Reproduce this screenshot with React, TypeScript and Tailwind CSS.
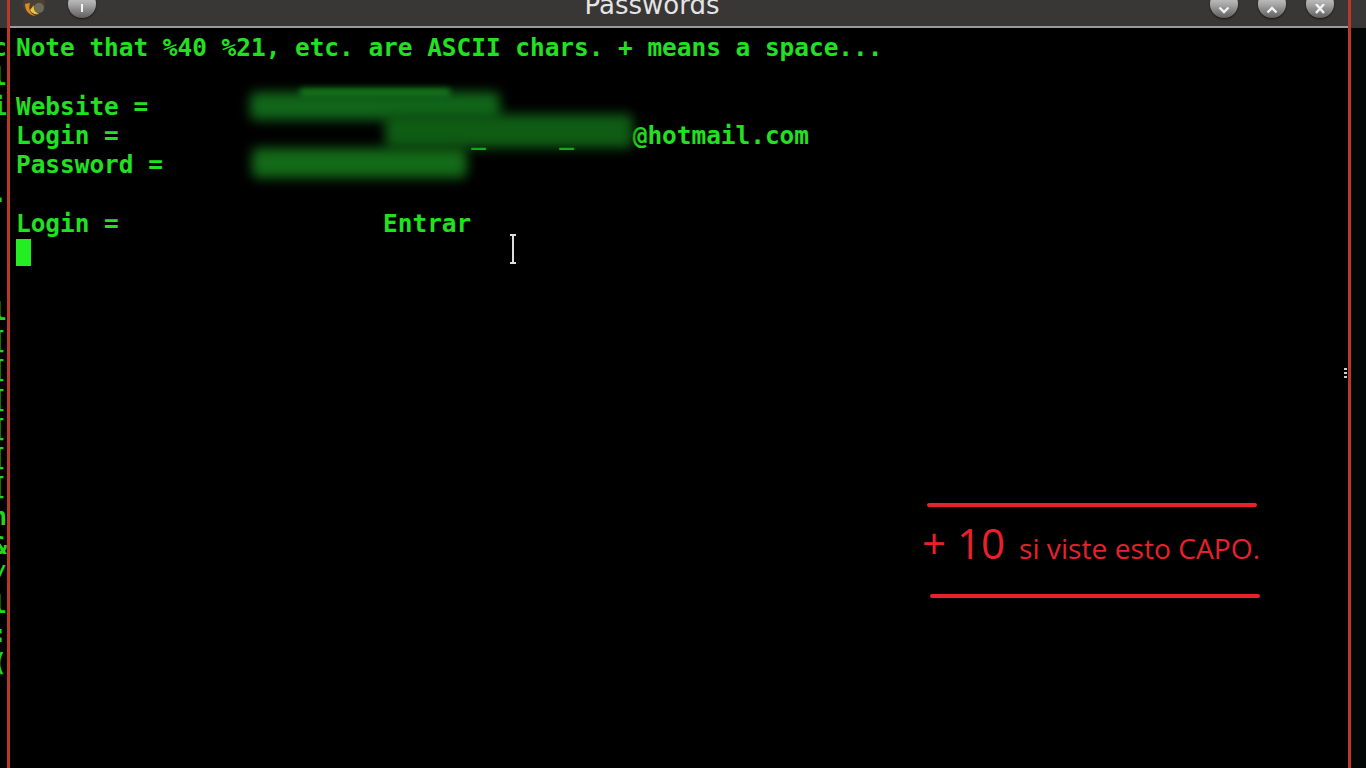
import React from "react";

const mono = { fontFamily: '"DejaVu Sans Mono", "Liberation Mono", monospace' };

function RoundButton({ children }: { children?: React.ReactNode }) {
  return (
    <div className="relative flex h-[28px] w-[28px] items-end justify-center rounded-full bg-gradient-to-b from-[#e2e2e2] via-[#a9a9a9] to-[#5f5f5f] pb-[4px] shadow-[0_1px_2px_rgba(0,0,0,0.6)]">
      {children}
    </div>
  );
}

function TitleBar() {
  return (
    <div className="flex h-[28px] items-start border-b-2 border-[#9a9a9a] bg-[#393636]">
      <div className="flex w-[90px] items-start gap-[20px] pl-[10px]">
        <div className="-mt-[10px] h-[28px] w-[28px]">
          <svg viewBox="0 0 28 28" width="28" height="28">
            <circle cx="14" cy="14" r="11" fill="#4a4036" />
            <path d="M5 14 C5 22 11 26 16 26 C10 24 8 19 10 13 Z" fill="#e08a1e" />
            <path d="M10 20 C12 24 16 25 19 24 C15 22 13 19 14 15 Z" fill="#f4c040" />
            <circle cx="19" cy="18" r="5" fill="#6e6a58" />
          </svg>
        </div>
        <div className="-mt-[10px]">
          <RoundButton>
            <div className="mb-[2px] h-[8px] w-[2px] bg-[#f4f4f4]" />
          </RoundButton>
        </div>
      </div>
      <div className="flex flex-1 justify-center overflow-hidden">
        <span
          className="-mt-[7px] text-[26px] leading-[25px] text-[#e4e4e4]"
          style={{ fontFamily: '"DejaVu Sans", sans-serif' }}
        >
          Passwords
        </span>
      </div>
      <div className="flex w-[144px] items-start gap-[20px] pl-[6px]">
        <div className="-mt-[10px]">
          <RoundButton>
            <svg width="12" height="8" viewBox="0 0 12 8">
              <path d="M1.5 1.5 L6 6 L10.5 1.5" stroke="#f2f2f2" strokeWidth="2.4" fill="none" />
            </svg>
          </RoundButton>
        </div>
        <div className="-mt-[10px]">
          <RoundButton>
            <svg width="12" height="8" viewBox="0 0 12 8">
              <path d="M1.5 6.5 L6 2 L10.5 6.5" stroke="#f2f2f2" strokeWidth="2.4" fill="none" />
            </svg>
          </RoundButton>
        </div>
        <div className="-mt-[10px]">
          <RoundButton>
            <svg width="12" height="10" viewBox="0 0 12 10">
              <path d="M2 0 L10 9 M10 0 L2 9" stroke="#f2f2f2" strokeWidth="2.4" fill="none" />
            </svg>
          </RoundButton>
        </div>
      </div>
    </div>
  );
}

const pad = (s: string, col: number) => s + " ".repeat(Math.max(0, col - s.length));

const lines = [
  "Note that %40 %21, etc. are ASCII chars. + means a space...",
  "",
  "Website =",
  pad(pad(pad("Login =", 31) + "_", 37) + "_", 42) + "@hotmail.com",
  "Password =",
  "",
  pad("Login =", 25) + "Entrar",
];

// last column of the terminal window behind, clipped by this window
const leftBits = [
  "c", "l", "i", "", "", ".", "", "", "", "l", "[", "[", "[", "[", "[", "[",
  "h", "&", "/", "l", ":", "(", "",
];

export default function App() {
  return (
    <div className="flex h-[768px] w-[1366px] overflow-hidden bg-black">
      {/* left neighbour window strip */}
      <div className="flex w-[7px] flex-col overflow-hidden">
        <div className="h-[28px] bg-[#393636]" />
        <div
          className="flex flex-col items-end pt-[5px] text-[24.4px] font-bold leading-[29.3px] text-[#1ed81e]"
          style={mono}
        >
          {leftBits.map((c, i) => (
            <div key={i} className="h-[29.3px] whitespace-pre">
              {c || " "}
            </div>
          ))}
        </div>
      </div>
      <div className="w-[3px] bg-[#b8392c]" />

      {/* terminal window */}
      <div className="flex flex-1 flex-col">
        <TitleBar />
        <div className="relative flex-1">
          <div
            className="whitespace-pre pl-[6px] pt-[5px] text-[24.4px] font-bold leading-[29.3px] text-[#22e022]"
            style={mono}
          >
            {lines.map((l, i) => (
              <div key={i} className="h-[29.3px]">
                {l}
              </div>
            ))}
            <div className="flex h-[29.3px] items-center">
              <div className="h-[27px] w-[15px] bg-[#22ee22]" />
            </div>
          </div>

          {/* redaction blur */}
          <div className="absolute left-[240px] top-[64px] h-[28px] w-[250px] rounded-md bg-[#11661a] blur-[6px]" />
          <div className="absolute left-[375px] top-[86px] h-[34px] w-[248px] rounded-md bg-[#0f5c14] blur-[6px]" />
          <div className="absolute left-[242px] top-[120px] h-[30px] w-[215px] rounded-md bg-[#136a18] blur-[6px]" />
          <div className="absolute left-[290px] top-[61px] h-[6px] w-[150px] bg-[#1a8a20] blur-[3px]" />

          {/* mouse I-beam */}
          <svg className="absolute left-[498px] top-[206px]" width="10" height="30" viewBox="0 0 10 30">
            <path d="M2 1 H8 M5 1 V29 M2 29 H8" stroke="#dedede" strokeWidth="2" fill="none" />
          </svg>

          {/* annotation */}
          <div className="absolute left-[912px] top-[475px] flex w-[360px] flex-col">
            <div className="ml-[5px] h-[4px] w-[330px] rounded-full bg-[#e8212a]" />
            <div
              className="mt-[12px] flex items-baseline gap-[14px] text-[#e8212a]"
              style={{ fontFamily: '"Open Sans", "Liberation Sans", sans-serif' }}
            >
              <span className="text-[42px] leading-[48px]">+ 10</span>
              <span className="text-[28.2px] leading-[32px]">si viste esto CAPO.</span>
            </div>
            <div className="ml-[8px] mt-[27px] h-[4px] w-[330px] rounded-full bg-[#e8212a]" />
          </div>
        </div>
      </div>

      <div className="relative w-[3px] bg-[#b8392c]">
        <div className="absolute left-[-4px] top-[368px] flex flex-col gap-[2px]">
          <div className="h-[2px] w-[3px] bg-[#cfcfcf]" />
          <div className="h-[2px] w-[3px] bg-[#cfcfcf]" />
          <div className="h-[2px] w-[3px] bg-[#cfcfcf]" />
        </div>
      </div>
      <div className="flex w-[15px] flex-col">
        <div className="h-[28px] bg-[#393636]" />
        <div className="flex-1 bg-[#020605]" />
      </div>
    </div>
  );
}
